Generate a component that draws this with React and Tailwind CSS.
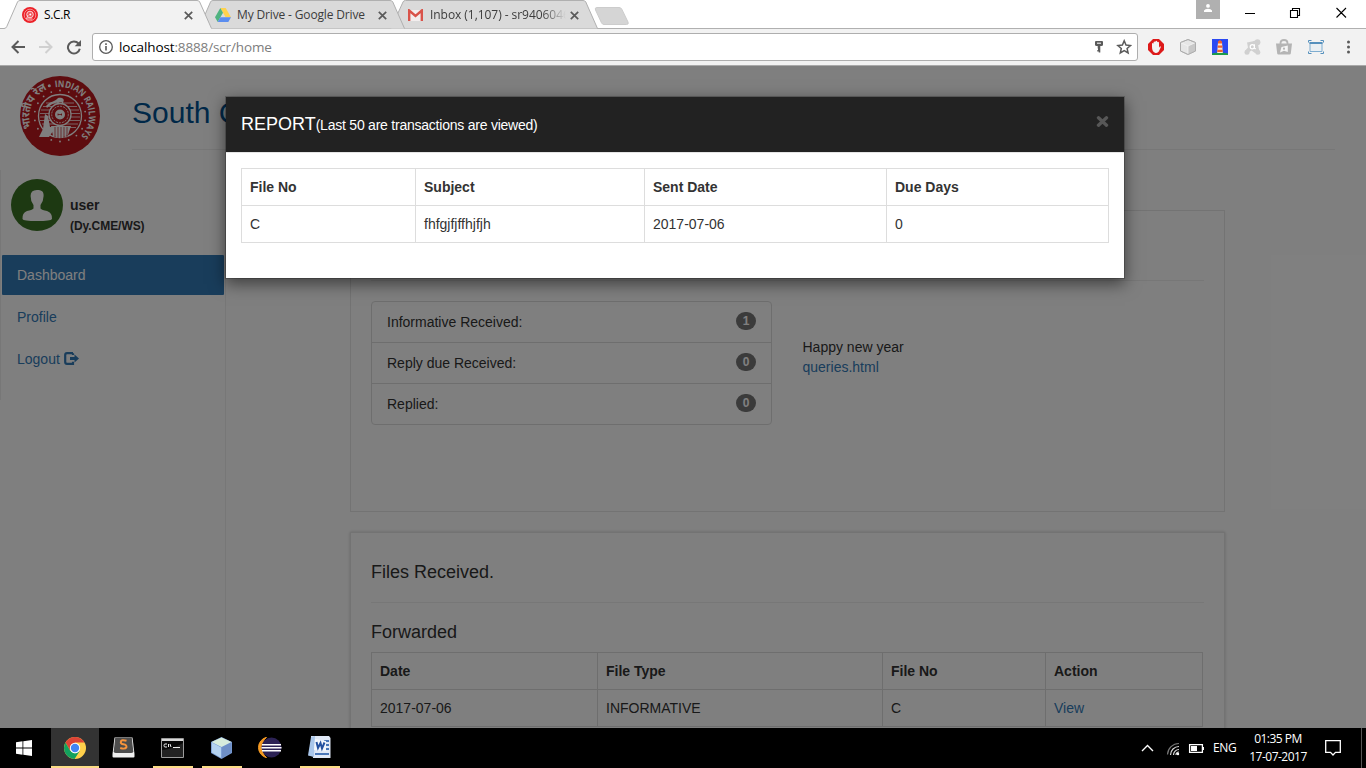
import React from "react";

const ARIAL = "font-['Liberation_Sans',Arial,sans-serif]";
const SEGOE = "font-['Open_Sans','Noto_Sans',sans-serif]";

function RailEmblem() {
  const dots = Array.from({ length: 18 }, (_, i) => {
    const a = (i * Math.PI * 2) / 18 - Math.PI / 2;
    return [40 + 25.5 * Math.cos(a), 40 + 25.5 * Math.sin(a)];
  });
  return (
    <svg className="h-20 w-20 shrink-0" viewBox="0 0 80 80">
      <defs>
        <path id="arc-r" d="M35.300 11.400 A29 29 0 0 1 60 61" />
        <path id="arc-l" d="M11.500 52 A30 30 0 0 1 29 12.5" />
      </defs>
      <circle cx="40" cy="40" r="40" fill="#bd191e" />
      <text fontSize="9.2" fontWeight="700" fill="#fff" fontFamily="Open Sans, sans-serif">
        <textPath href="#arc-r" textLength="72" lengthAdjust="spacingAndGlyphs">INDIAN RAILWAYS</textPath>
      </text>
      <text fontSize="11" fontWeight="700" fill="#fff" fontFamily="Noto Sans Devanagari, Noto Sans, sans-serif">
        <textPath href="#arc-l" textLength="46" lengthAdjust="spacingAndGlyphs">भारतीय रेल</textPath>
      </text>
      <circle cx="29.300" cy="9.8" r="1.5" fill="#fff" />
      {dots.map(([x, y], i) => (
        <circle key={i} cx={x} cy={y} r="0.900" fill="#fff" />
      ))}
      <circle cx="40" cy="40" r="21.5" fill="none" stroke="#fff" strokeWidth="1.300" />
      <path d="M26 27H54M23 30.500H57M21 34H59M20 37.500H60M20 41H60M20 44.500H60M22 48H58M24 51.500H56" stroke="#fff" strokeWidth="1.200" opacity=".75" />
      <path d="M26 30C30 25 35 26 38 22C43 21 45 24 43 26C36 26 31 28 27 32Z" fill="#fff" />
      <circle cx="40" cy="38.5" r="11" fill="#bd191e" stroke="#fff" strokeWidth="1.3" />
      <circle cx="40" cy="38.5" r="8.300" fill="none" stroke="#fff" strokeWidth=".9" strokeDasharray="2 1" />
      <circle cx="40" cy="38.5" r="5" fill="#fff" />
      <path d="M38 37.500V39.500M38 38.5H42M41.500 37.500V39.500" stroke="#bd191e" strokeWidth=".8" />
      <path d="M38 27.500V25H42.500V27.500" fill="none" stroke="#fff" strokeWidth="1.4" />
      <path d="M25 38L28 40L30 51H33V55L29 61H19L23 53Z" fill="#fff" />
      <path d="M31 50H51L48 59L40.5 62L33 60Z" fill="#fff" />
      <path d="M35 51V61M38 51V62M41 51V63M44 51V62M47 51V61" stroke="#bd191e" strokeWidth=".7" />
    </svg>
  );
}

function TabClose() {
  return (
    <svg className="h-[9px] w-[9px] shrink-0" viewBox="0 0 9 9">
      <path d="M.800 .800L8.200 8.200M8.200 .800L.800 8.200" stroke="#5a5a5a" strokeWidth="1.7" />
    </svg>
  );
}

function TabStrip() {
  return (
    <div className={`relative flex h-[29px] shrink-0 bg-white ${SEGOE}`}>
      <svg className="absolute top-0 left-0 h-[29px] w-full" viewBox="0 0 1366 29">
        <path d="M0 28.5H1366" stroke="#b0b0b0" />
        <path d="M391 28.5L403 2Q403.500 .5 405.500 .5H583Q585 .5 585.800 2L597.500 28.500" fill="#dadada" stroke="#b0b0b0" />
        <path d="M199 28.5L210.500 2Q211 .5 213 .5H390Q392 .5 392.800 2L404.500 28.500" fill="#dadada" stroke="#b0b0b0" />
        <path d="M0 28.5H4Q6 28.5 6.800 26.500L17.500 2Q18.200 .5 20 .5H197Q199 .5 199.700 2L211.500 28.500V30H0Z" fill="#f2f2f2" />
        <path d="M0 28.5H4Q6 28.5 6.800 26.500L17.500 2Q18.200 .5 20 .5H197Q199 .5 199.700 2L211.500 28.500" fill="none" stroke="#b0b0b0" />
        <path d="M597 7.500H619Q621 7.500 621.800 9.200L628 22Q629 24.500 626.500 24.500H604Q602.300 24.500 601.500 22.800L595.500 10Q594.500 7.500 597 7.500Z" fill="#d5d5d5" stroke="#cccccc" />
      </svg>
      <div className="relative flex h-[29px] w-[215px] items-center pt-[1px] pl-[22px]">
        <svg className="mt-[-1px] h-4 w-4 shrink-0" viewBox="0 0 16 16">
          <circle cx="8" cy="8" r="8" fill="#ec2027" />
          <circle cx="8" cy="8" r="5.800" fill="none" stroke="#f58a8e" strokeWidth="1" />
          <circle cx="8" cy="7.500" r="3.300" fill="#f0585e" stroke="#fbd5d6" />
          <path d="M4.500 12L6 8M10.500 12H5" stroke="#fbd5d6" strokeWidth="1" />
          <circle cx="8.300" cy="7.600" r="1" fill="#fff" />
        </svg>
        <span className="mt-[-1px] ml-[6px] w-[140px] text-[12px] tracking-[-0.35px] text-black">S.C.R</span>
        <TabClose />
      </div>
      <div className="relative flex h-[29px] w-[193px] items-center pt-[1px]">
        <svg className="mt-[-1px] h-[14px] w-[16px] shrink-0" viewBox="0 0 16 14">
          <path d="M5.300 0H10.700L16 9.200H10.600Z" fill="#ffd24d" />
          <path d="M5.300 0L8 4.700L2.700 14L0 9.300Z" fill="#4fb380" />
          <path d="M5.400 9.300H16L13.300 14H2.700Z" fill="#5b8def" />
        </svg>
        <span className="mt-[-1px] ml-[6px] w-[141px] text-[12px] tracking-[-0.15px] whitespace-nowrap text-[#3c3c3c]">My Drive - Google Drive</span>
        <TabClose />
      </div>
      <div className="relative flex h-[29px] w-[190px] items-center pt-[1px]">
        <svg className="h-[12px] w-[15px] shrink-0" viewBox="0 0 15 12">
          <path d="M1 1H14V12H1Z" fill="#f3eeee" />
          <path d="M1.200 12V1.500L7.500 7L13.800 1.500V12" fill="none" stroke="#d9534a" strokeWidth="2.400" />
        </svg>
        <span className="mt-[-1px] ml-[7px] w-[140px] overflow-hidden text-[12px] tracking-[-0.05px] whitespace-nowrap text-[#3c3c3c] [mask-image:linear-gradient(to_right,black_112px,transparent_136px)]">
          Inbox (1,107) - sr9406046
        </span>
        <TabClose />
      </div>
      <div className="relative ml-auto flex">
        <div className="flex h-[19px] w-6 justify-center bg-[#b0b0b0]">
          <svg className="mt-[4px] h-[8px] w-[8px]" viewBox="0 0 8 8">
            <circle cx="4" cy="1.900" r="1.900" fill="#fff" />
            <path d="M0 8V6.500Q1 4.800 4 4.800T8 6.500V8Z" fill="#fff" />
          </svg>
        </div>
        <svg className="mt-[7px] ml-[25px] h-[12px] w-[102px]" viewBox="0 0 102 12">
          <path d="M0 6.500H10M45.500 3.500H52.500V10.500H45.500ZM47.500 3V1.500H54.500V8.500H53M91.500 1L101 10.500M101 1L91.500 10.500" fill="none" stroke="#000" strokeWidth="1.100" />
        </svg>
        <div className="w-[19px]" />
      </div>
    </div>
  );
}

function Toolbar() {
  return (
    <div className="flex h-[37px] shrink-0 items-center border-b border-[#a9a9a9] bg-[#f2f2f2] pl-[11px]">
      <svg className="h-4 w-[72px] shrink-0" viewBox="0 0 72 16" fill="none">
        <path d="M14 8H1.500M7.500 2L1.500 8L7.500 14" stroke="#5a5a5a" strokeWidth="2" />
        <path d="M28 8H40.500M34.500 2L40.500 8L34.500 14" stroke="#d0d0d0" strokeWidth="2" />
        <path d="M67.500 4.500A6 6 0 1 0 68.800 9.800" stroke="#5a5a5a" strokeWidth="2" />
        <path d="M70 1V7.300H63.700Z" fill="#5a5a5a" />
      </svg>
      <div className="ml-[9px] flex h-[28px] w-[1046px] shrink-0 items-center rounded-[3px] border border-[#aeaeae] bg-white">
        <svg className="ml-[6px] h-[14px] w-[14px] shrink-0" viewBox="0 0 14 14" fill="none">
          <circle cx="7" cy="7" r="6.300" stroke="#5a5a5a" strokeWidth="1.300" />
          <path d="M7 6V10.500M7 3.300V4.900" stroke="#5a5a5a" strokeWidth="1.600" />
        </svg>
        <div className={`ml-[6px] text-[13.500px] tracking-[-0.13px] whitespace-nowrap text-[#7d7d7d] ${SEGOE}`}>
          <span className="text-black">localhost</span>:8888/scr/home
        </div>
        <svg className="mr-[5px] ml-auto h-4 w-[38px]" viewBox="0 0 38 16" fill="none">
          <g transform="translate(1 .5)">
            <path d="M0 2.500Q0 1.500 1 1.500H7Q8 1.500 8 2.500V5Q8 6.500 6.500 6.500H1.500Q0 6.500 0 5Z" fill="#5a5a5a" />
            <path d="M2 3.700H6" stroke="#fff" />
            <path d="M2.700 6H5.300V13H3.700V12H2.300V10.500H3V9H2.700Z" fill="#5a5a5a" />
          </g>
          <path d="M31 1.800L32.800 6.100L37.300 6.500L33.900 9.500L34.900 14L31 11.600L27.100 14L28.100 9.500L24.700 6.500L29.200 6.100Z" transform="translate(-.8 0)" stroke="#5a5a5a" strokeWidth="1.500" />
        </svg>
      </div>
      <svg className="ml-[10px] h-4 w-[208px] shrink-0" viewBox="0 0 208 16">
        <path d="M5 0H11L16 5V11L11 16H5L0 11V5Z" fill="#dd1a1a" />
        <path d="M4 8V4.500Q4.700 3.500 5.600 4.500V3Q6.500 2 7.400 3V2.300Q8.300 1.300 9.200 2.300V3.200Q10.100 2.300 11 3.400V8.700L12 7.300Q13 7.200 12.800 8.300L10.800 12.500Q9.500 14.500 7 13.800Q4 12.500 4 8Z" fill="#f3f3f3" />
        <g stroke="#a8a8a8" strokeWidth=".8" strokeLinejoin="round">
          <path d="M40 .5L47.500 3.500V12L40 15.500L32.500 12V3.500Z" fill="#e6e6e6" />
          <path d="M40 7L47.500 3.500V12L40 15.500Z" fill="#c8c8c8" stroke="none" />
          <path d="M32.500 3.500L40 7L47.500 3.500M40 7V15.500" fill="none" stroke="#f4f4f4" />
          <path d="M40 .5L47.500 3.500V12L40 15.500L32.500 12V3.500Z" fill="none" />
        </g>
        <path d="M64 0H80V16H64Z" fill="#2b49f2" />
        <path d="M64 16V14.500Q72 12.500 80 14.500V16Z" fill="#1c9c48" />
        <path d="M70 3H74L74.800 14H69.200Z" fill="#ffe8d0" />
        <path d="M70 2.500L72 1L74 2.500V4.500H70ZM69.800 6.500H74.300V8.700H69.600ZM69.400 10.700H74.700V13H69.200Z" fill="#f2622d" />
        <g fill="#d0d0d0">
          <circle cx="109.500" cy="3.200" r="2.900" />
          <circle cx="99" cy="13.200" r="2.500" />
          <circle cx="109.800" cy="13.200" r="2.500" />
          <path d="M99 3.500L104 2.500L109.500 1L110.500 8L111.500 13L107 14L103.500 11.500L99 14.500L97 12L100 8.500Z" />
        </g>
        <circle cx="104.300" cy="7.800" r="2.100" fill="none" stroke="#fff" strokeWidth="1.200" />
        <path d="M106.500 5.300V9.700H108" stroke="#fff" fill="none" />
        <path d="M128 4.500H144L142.800 14.500Q142.700 15.500 141.500 15.500H130.500Q129.300 15.500 129.200 14.500Z" fill="#b4b4b4" />
        <path d="M132.500 6V4Q132.500 1 136 1T139.500 4V6" fill="none" stroke="#b4b4b4" strokeWidth="1.800" />
        <path d="M132 13.500L133.500 8L139.800 6.500L139.800 13L136 11.800Z" fill="#f5f5f5" />
        <circle cx="136" cy="9.700" r="1.100" fill="#b4b4b4" />
        <g fill="none" stroke="#5590bd">
          <path d="M160.500 3.500V1.500H163.500M172.500 1.500H175.500V3.500M175.500 12.500V14.500H172.500M163.500 14.500H160.500V12.500" />
          <path d="M162 3.500H174V12.500H162Z" fill="#e9eff3" stroke="#7fadd0" />
          <path d="M161.500 4H174.500" strokeWidth="2" />
        </g>
        <g fill="#5a5a5a"><circle cx="200.500" cy="3" r="1.500" /><circle cx="200.500" cy="8" r="1.500" /><circle cx="200.500" cy="13" r="1.500" /></g>
      </svg>
    </div>
  );
}

function GridTable({ widths, head, row, link, width }) {
  return (
    <table className={`table-fixed border-collapse text-left text-[14px] leading-5 text-[#333] ${width}`}>
      <colgroup>
        {widths.map((w, i) => (
          <col key={i} style={{ width: w }} />
        ))}
      </colgroup>
      <tbody>
        <tr>
          {head.map((h) => (
            <th key={h} className="border border-[#ddd] p-2 font-bold">{h}</th>
          ))}
        </tr>
        <tr>
          {row.map((c, i) => (
            <td key={i} className={`border border-[#ddd] p-2 ${link === i ? "text-[#337ab7]" : ""}`}>{c}</td>
          ))}
        </tr>
      </tbody>
    </table>
  );
}

function Sidebar() {
  return (
    <aside className="h-[230px] w-[225px] shrink-0 border-l border-[#eee] pt-[9px]">
      <div className="flex h-[52px] pl-[10px]">
        <svg className="h-[52px] w-[52px] shrink-0" viewBox="0 0 52 52">
          <circle cx="26" cy="26" r="26" fill="#3b7225" />
          <path d="M26 11C30.500 11 33 12.500 32.600 17Q32.500 22 29.500 26V29.500Q31 31 36 32Q41.500 34 41 40Q40 42 26 42T11.500 40Q11 34 16 32Q21 31 22.500 29.500V26Q19.500 22 19.600 17Q19.500 11 26 11Z" fill="#fff" />
        </svg>
        <div className="pt-[16px] pl-[7px] text-[#333]">
          <div className="text-[14px] leading-5 font-bold">user</div>
          <div className="pt-px text-[12px] leading-5 font-bold tracking-[-0.05px]">(Dy.CME/WS)</div>
        </div>
      </div>
      <nav className="mt-[24px] ml-[1px] flex w-[222px] flex-col gap-[2px] text-[14px] leading-5 text-[#337ab7]">
        <a className="rounded-[1px] bg-[#337ab7] px-[15px] py-[10px] text-white">Dashboard</a>
        <a className="px-[15px] py-[10px]">Profile</a>
        <a className="flex items-center gap-[4px] px-[15px] py-[10px]">
          Logout
          <svg className="mt-[-1px] h-[13px] w-[15px]" viewBox="0 0 15 13">
            <path d="M9 1.200H3Q1.200 1.200 1.200 3V10Q1.200 11.800 3 11.800H9V9.800M9 1.200V3" fill="none" stroke="#337ab7" strokeWidth="2.200" />
            <path d="M6 5H10.500V2.600L15 6.500L10.500 10.400V8H6Z" fill="#337ab7" />
          </svg>
        </a>
      </nav>
    </aside>
  );
}

function Dashboard() {
  const counts = [["Informative Received:", 1], ["Reply due Received:", 0], ["Replied:", 0]];
  return (
    <div className="h-full overflow-hidden bg-white">
      <header className="flex h-[104px] pt-[10px] pl-[20px]">
        <RailEmblem />
        <div className="ml-8 h-[74px] w-[1203px] border-b border-[#eee] pt-[20px] text-[30px] leading-[33px] text-[#005191]">
          South C
        </div>
      </header>
      <div className="flex">
        <Sidebar />
        <main className="h-[600px] flex-1 border-l border-[#eee] pt-[40px] pl-[124px]">
          <section className="h-[302px] w-[875px] border border-[#e7e7e7] px-5">
            <div className="h-[70px] w-[833px] border-b border-[#eee]" />
            <div className="flex pt-5">
              <ul className="w-[401px] rounded border border-[#ddd] text-[14px] leading-5 text-[#333]">
                {counts.map(([label, n], i) => (
                  <li key={label} className={`flex justify-between px-[15px] ${i ? "h-[41px] border-t border-[#ddd] pt-[10px]" : "h-10 pt-[10px]"}`}>
                    <span>{label}</span>
                    <span className="flex h-[18px] min-w-5 items-center justify-center rounded-[10px] bg-[#777] text-[12px] leading-none font-bold text-white">{n}</span>
                  </li>
                ))}
              </ul>
              <div className="pt-[36px] pl-[30.500px] text-[14px] leading-5 text-[#333]">
                <div>Happy new year</div>
                <a className="text-[#337ab7]">queries.html</a>
              </div>
            </div>
          </section>
          <section className="mt-[20px] h-[300px] w-[875px] border border-[#e7e7e7] px-5 pt-[29px] text-[#333] shadow-[0_0_3px_rgba(0,0,0,0.2)]">
            <h4 className="h-[41px] w-[833px] border-b border-[#eee] text-[18px] leading-[20px]">Files Received.</h4>
            <h4 className="mt-[19px] mb-[10px] text-[18px] leading-[20px]">Forwarded</h4>
            <GridTable
              width="w-[831px]"
              widths={[226, 285, 163, 157]}
              head={["Date", "File Type", "File No", "Action"]}
              row={["2017-07-06", "INFORMATIVE", "C", "View"]}
              link={3}
            />
          </section>
        </main>
      </div>
    </div>
  );
}

function ReportDialog() {
  return (
    <div className="absolute inset-0 flex items-start bg-black/50 pt-[30px] pl-[225px]">
      <div role="dialog" className="h-[183px] w-[900px] border border-black/20 bg-white bg-clip-padding shadow-[0_5px_15px_rgba(0,0,0,0.5)]">
        <div className="flex h-14 justify-between border-b border-[#e5e5e5] bg-[#222] px-[15px] pt-[15px]">
          <h4 className="text-[18px] leading-[25px] whitespace-nowrap text-white">
            REPORT<span className="text-[14px] tracking-[-0.23px]">(Last 50 are transactions are viewed)</span>
          </h4>
          <svg className="mt-[4px] h-[11px] w-[13px]" viewBox="0 0 13 11">
            <path d="M2.500 1.800L10.500 9.200M10.500 1.800L2.500 9.200" stroke="#575757" strokeWidth="3.400" strokeLinecap="round" />
          </svg>
        </div>
        <div className="p-[15px]">
          <GridTable
            width="w-[867px]"
            widths={[174, 229, 242, 222]}
            head={["File No", "Subject", "Sent Date", "Due Days"]}
            row={["C", "fhfgjfjffhjfjh", "2017-07-06", "0"]}
          />
        </div>
      </div>
    </div>
  );
}

function Slot({ active, open, first, children }) {
  return (
    <div className={`flex h-10 shrink-0 flex-col items-center justify-between ${first ? "w-12" : "w-10"} ${active ? "bg-[#333]" : ""}`}>
      <div className={`flex h-[38px] items-center ${first ? "" : "pr-[2px]"}`}>{children}</div>
      <div className={`h-[2px] w-full ${open ? "bg-[#fbdc86]" : ""}`} />
    </div>
  );
}

function Taskbar() {
  return (
    <div className={`flex h-10 shrink-0 bg-black text-white ${SEGOE}`}>
      <div className="flex w-[51px] items-center pl-4">
        <svg className="h-4 w-4" viewBox="0 0 16 16" fill="#fff">
          <path d="M0 2.200L6.500 1.300V7.600H0ZM7.300 1.200L16 0V7.600H7.300ZM0 8.400H6.500V14.700L0 13.800ZM7.300 8.400H16V16L7.300 14.800Z" />
        </svg>
      </div>
      <div className="flex gap-[9px]">
        <Slot active open first>
          <svg className="mt-[2px] h-[22px] w-[22px]" viewBox="0 0 22 22">
            <circle cx="11" cy="11" r="11" fill="#ffd04b" />
            <path d="M1.500 5.500A11 11 0 0 1 20.500 5.500H11L6.200 13.800Z" fill="#dc4437" />
            <path d="M1.500 5.500A11 11 0 0 0 10.600 22L15.800 13.800L11 16.500L6.200 13.800Z" fill="#12a15e" />
            <circle cx="11" cy="11" r="5.200" fill="#fff" />
            <circle cx="11" cy="11" r="4.200" fill="#4285f4" />
          </svg>
        </Slot>
        <div className="-ml-[4px]">
          <Slot>
            <svg className="h-[21px] w-[23px]" viewBox="0 0 23 21">
              <path d="M2.500 .5H20.500L22.500 17V19.500Q22.500 20.500 21.500 20.500H1.500Q.5 20.500 .5 19.500V17Z" fill="#f0f0f0" />
              <path d="M3.200 1H19.800L21.300 14.500Q21 16 19 16H4Q2 16 1.700 14.500Z" fill="#4d4d4d" />
              <path d="M14.500 3.700Q8.800 2.200 8.800 5.200Q8.800 7 11.500 7.300Q15 8 14.400 10.400Q13 12.500 8.200 11" fill="none" stroke="#f7933b" strokeWidth="2" />
            </svg>
          </Slot>
        </div>
        <Slot open>
          <svg className="mt-[1px] h-[20px] w-[23px]" viewBox="0 0 23 20">
            <path d="M.5 .5H22.500V19.500H.5Z" fill="#080808" stroke="#9b9b9b" />
            <path d="M1 2H22" stroke="#d8d8d8" strokeWidth="2" />
            <path d="M1 12Q12 11 22 5V19H1Z" fill="#222" />
            <path d="M6 6H4Q3 6 3 7.500T4 9H6M7.500 6V9M9 6L10 9M12 9.500H19" stroke="#eee" fill="none" />
          </svg>
        </Slot>
        <Slot open>
          <svg className="mt-[2px] h-[22px] w-[21px]" viewBox="0 0 21 22">
            <path d="M10.500 0L21 5V16L10.500 22L0 16V5Z" fill="#7598d2" />
            <path d="M10.500 .500L20.500 5L10.500 10L.5 5Z" fill="#d7ecdc" />
            <path d="M.8 5.500L10.200 10.500V21L.8 15.500Z" fill="#b4d2ef" />
            <path d="M10.800 10.500L20.200 5.500V15.500L10.800 21Z" fill="#6e8fc6" />
          </svg>
        </Slot>
        <Slot>
          <svg className="mt-[1px] h-[21px] w-[24px]" viewBox="0 0 24 21">
            <path d="M8.500 .3A10.500 10.500 0 0 0 8.500 20.700A13.500 13.500 0 0 1 8.500 .3Z" fill="#f59a23" stroke="#f59a23" />
            <circle cx="13.500" cy="10.500" r="10" fill="#2c2255" />
            <path d="M4 7.700H23M3.500 10.700H23.500M4 13.700H23" stroke="#fff" strokeWidth="1.500" />
          </svg>
        </Slot>
        <Slot open>
          <svg className="mt-[-1px] h-[22px] w-[23px]" viewBox="0 0 23 22">
            <path d="M3 0H21L22.500 2V22H5Z" fill="#dfe8f6" />
            <path d="M16 4H21V6H16ZM16 8H21V10H16ZM16 12H21V14H16ZM7 17H21V19H7Z" fill="#4876b8" />
            <path d="M3 1L7 0L6 21L0 19.500Z" fill="#a9c6ea" />
            <path d="M7 3L18 5V15L6 14Z" fill="#f3f7fd" />
            <path d="M8.500 6L10 12L12.500 7L14 12.500L16.500 6.500" fill="none" stroke="#23509f" strokeWidth="2" />
          </svg>
        </Slot>
      </div>
      <div className="ml-auto flex">
        <svg className="mt-[10px] h-[20px] w-[66px]" viewBox="0 0 66 20" fill="none">
          <path d="M1 13L6.500 7.500L12 13" stroke="#fff" strokeWidth="1.400" />
          <g strokeWidth="1.200">
            <path d="M26.500 16.500A11.500 11.500 0 0 1 38 5.500" stroke="#777" />
            <path d="M29.500 17A8.500 8.500 0 0 1 38 8.500M32.500 17A5.500 5.500 0 0 1 38 11.500M35 17A3 3 0 0 1 38 14" stroke="#ddd" />
          </g>
          <circle cx="37" cy="16" r="1.200" fill="#fff" />
          <path d="M48.600 6.600H61.400V14.400H48.600Z" stroke="#fff" strokeWidth="1.300" />
          <path d="M50 8H56V13H50ZM62 9H63V12H62Z" fill="#fff" />
        </svg>
        <div className="mt-[11px] ml-[6px] w-[24px] text-[12px] leading-[17px] tracking-[-0.4px]">ENG</div>
        <div className="ml-[11px] w-[60px] pt-[2px] text-center text-[12px] leading-[18px] tracking-[-0.5px] whitespace-nowrap">
          <div>01:35 PM</div>
          <div>17-07-2017</div>
        </div>
        <svg className="mt-[12px] ml-[17px] h-4 w-4" viewBox="0 0 16 16" fill="none">
          <path d="M.7 .7H15.300V12.300H10.500L8 15L5.500 12.300H.7Z" stroke="#fff" strokeWidth="1.300" />
        </svg>
        <div className="mr-px ml-[20px] h-10 w-[4px] border-l border-[#555]" />
      </div>
    </div>
  );
}

export default function App() {
  return (
    <div className={`flex h-[768px] w-[1366px] flex-col overflow-hidden ${ARIAL}`}>
      <TabStrip />
      <Toolbar />
      <div className="relative h-[662px] shrink-0 overflow-hidden">
        <Dashboard />
        <ReportDialog />
      </div>
      <Taskbar />
    </div>
  );
}
